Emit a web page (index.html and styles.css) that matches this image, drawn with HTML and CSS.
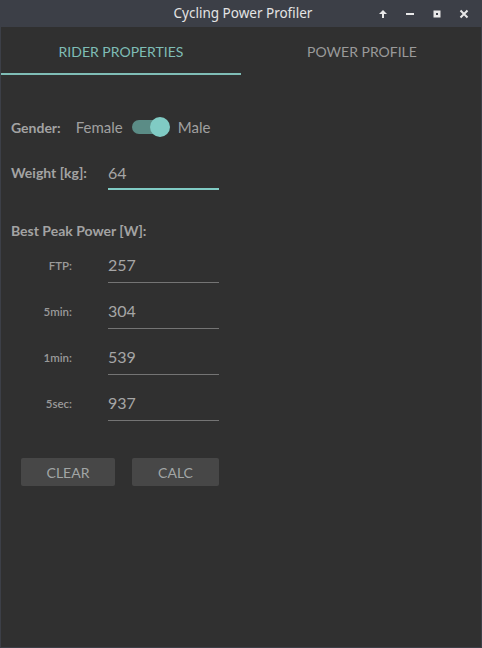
FILE: index.html
```html
<!DOCTYPE html>
<html>
<head>
<meta charset="utf-8">
<link rel="stylesheet" href="styles.css">
</head>
<body>
<div class="window">
  <div class="titlebar">
    <div class="title">Cycling Power Profiler</div>
    <div class="controls">
      <svg class="ctl" width="10" height="10" viewBox="0 0 10 10"><path d="M5 1 L9 5 L6 5 L6 9 L4 9 L4 5 L1 5 Z" fill="#e8e8e8"/></svg>
      <svg class="ctl" width="10" height="10" viewBox="0 0 10 10"><rect x="1" y="4" width="8" height="2" fill="#e8e8e8"/></svg>
      <svg class="ctl" width="10" height="10" viewBox="0 0 10 10"><path d="M1.5 1.5 H8.5 V8.5 H1.5 Z M4 4 V6 H6 V4 Z" fill="#e8e8e8" fill-rule="evenodd"/></svg>
      <svg class="ctl" width="10" height="10" viewBox="0 0 10 10"><path d="M1.5 1.5 L8.5 8.5 M8.5 1.5 L1.5 8.5" stroke="#e8e8e8" stroke-width="2"/></svg>
    </div>
  </div>
  <div class="content">
    <div class="tabs">
      <div class="tab active">RIDER PROPERTIES</div>
      <div class="tab">POWER PROFILE</div>
    </div>
    <div class="form">
      <div class="gender-row">
        <span class="label">Gender:</span>
        <span class="opt female">Female</span>
        <span class="toggle"><span class="track"></span><span class="knob"></span></span>
        <span class="opt">Male</span>
      </div>
      <div class="weight-row">
        <span class="label weight-label">Weight [kg]:</span>
        <div class="field focused">64</div>
      </div>
      <div class="label peak-title">Best Peak Power [W]:</div>
      <div class="peak-rows">
        <div class="peak-row"><span class="sublabel">FTP:</span><div class="field">257</div></div>
        <div class="peak-row"><span class="sublabel">5min:</span><div class="field">304</div></div>
        <div class="peak-row"><span class="sublabel">1min:</span><div class="field">539</div></div>
        <div class="peak-row"><span class="sublabel">5sec:</span><div class="field">937</div></div>
      </div>
      <div class="buttons">
        <div class="btn clear">CLEAR</div>
        <div class="btn calc">CALC</div>
      </div>
    </div>
  </div>
</div>
</body>
</html>
```
FILE: styles.css
```css
html, body {
  margin: 0;
  padding: 0;
  background: #3c3f47;
}
.window {
  width: 482px;
  height: 648px;
  display: flex;
  flex-direction: column;
}
.titlebar {
  height: 27px;
  flex: none;
  position: relative;
  display: flex;
  align-items: center;
  justify-content: center;
  background: #3c3f47;
}
.title {
  font-family: "Noto Sans", "Open Sans", sans-serif;
  font-size: 13.5px;
  color: #e4e4e4;
  margin-left: 4px;
  margin-top: -1px;
}
.controls {
  position: absolute;
  right: 13px;
  top: 9px;
  display: flex;
  gap: 17px;
}
.ctl { display: block; }
.content {
  flex: 1;
  margin: 0 1px 1px 1px;
  background: #303030;
  display: flex;
  flex-direction: column;
}
.tabs {
  display: flex;
  height: 48px;
}
.tab {
  width: 240px;
  box-sizing: border-box;
  display: flex;
  align-items: center;
  justify-content: center;
  font-family: Lato, sans-serif;
  font-size: 14px;
  color: #9a9a9a;
  padding-top: 2px;
  border-bottom: 2px solid transparent;
}
.tab.active {
  color: #7fbdb6;
  border-bottom-color: #7fbdb6;
}
.tab + .tab { padding-left: 2px; }
.form {
  padding: 37px 0 0 10px;
  display: flex;
  flex-direction: column;
  font-family: Lato, sans-serif;
}
.label {
  font-weight: bold;
  font-size: 14px;
  color: #a3a3a3;
}
.gender-row {
  height: 30px;
  display: flex;
  align-items: center;
}
.opt {
  font-size: 15px;
  color: #a0a0a0;
}
.female { margin-left: 15px; }
.toggle {
  position: relative;
  width: 38px;
  height: 22px;
  margin: 0 8px 0 9px;
}
.track {
  position: absolute;
  left: 0;
  top: 4px;
  width: 34px;
  height: 14px;
  border-radius: 7px;
  background: #5b8c86;
}
.knob {
  position: absolute;
  left: 18px;
  top: 1px;
  width: 20px;
  height: 20px;
  border-radius: 50%;
  background: #80cbc4;
}
.weight-row {
  margin-top: 16px;
  display: flex;
  align-items: flex-start;
}
.weight-label {
  width: 97px;
  line-height: 30px;
}
.field {
  width: 111px;
  box-sizing: border-box;
  height: 31px;
  line-height: 26px;
  font-size: 16px;
  color: #a6a6a6;
  border-bottom: 1px solid #747474;
}
.field.focused {
  height: 32px;
  line-height: 30px;
  border-bottom: 2px solid #80cbc4;
}
.peak-title {
  margin-top: 31px;
  line-height: 20px;
}
.peak-rows {
  margin-top: 11px;
  display: flex;
  flex-direction: column;
  gap: 15px;
}
.peak-row {
  display: flex;
  align-items: flex-start;
}
.sublabel {
  width: 61px;
  text-align: right;
  margin-right: 36px;
  font-size: 11.5px;
  font-weight: 600;
  color: #9a9a9a;
  line-height: 27px;
}
.buttons {
  margin-top: 37px;
  margin-left: 10px;
  display: flex;
  gap: 17px;
}
.btn {
  height: 28px;
  border-radius: 2px;
  background: #474747;
  color: #a2a6a6;
  font-size: 14px;
  display: flex;
  align-items: center;
  justify-content: center;
}
.clear { width: 94px; }
.calc { width: 87px; }
```
